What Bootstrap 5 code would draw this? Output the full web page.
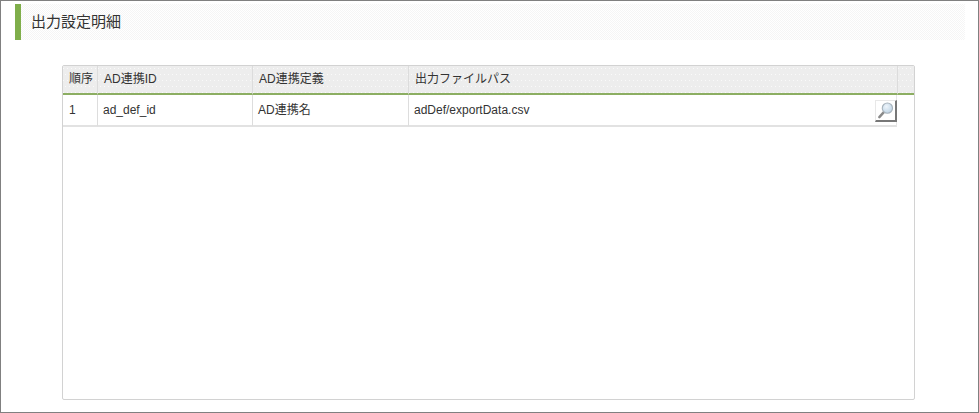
<!DOCTYPE html>
<html lang="ja">
<head>
<meta charset="utf-8">
<title>出力設定明細</title>
<link href="https://cdn.jsdelivr.net/npm/bootstrap@5.3.0/dist/css/bootstrap.min.css" rel="stylesheet">
<style>
html,body{height:100%;margin:0;background:#fff}
body{font-family:"Liberation Sans","Noto Sans CJK JP",sans-serif;font-size:12px;color:#333}
.frame{height:413px;border:1px solid #808080;padding:3px 0 0 14px;overflow:hidden}
.title-bar{height:36px;margin-right:13px;border-left:6px solid #7fae4a;padding-left:10px;font-size:15px;line-height:35px;color:#333;
 background:repeating-conic-gradient(#f5f5f5 0 25%,#fff 0 50%) 0 0/2px 2px}
.grid-wrap{margin:25px 63px 0 47px;height:335px;border:1px solid #d2d2d2;border-radius:2px}
.head-strip{display:flex}
.dotted-head{background-color:#ededed;
 background-image:conic-gradient(from 270deg at 1px 1px,#fafafa 25%,transparent 0),conic-gradient(from 270deg at 1px 1px,#fafafa 25%,transparent 0);
 background-size:4px 12px;background-position:0 2px,2px 8px}
.data-grid{table-layout:fixed;width:834px;border-collapse:separate;border-spacing:0;margin:0}
.data-grid th,.data-grid td{font-weight:400;font-size:12px;color:#333;vertical-align:middle;white-space:nowrap}
.data-grid th{height:29px;border-bottom:2px solid #8cae62;border-left:1px solid #dcdcdc;padding:0 0 1px 6px}
.data-grid th:first-child{border-left:0}
.data-grid td{height:32px;background:#fff;border-left:1px solid #ddd;border-bottom:2px solid #e2e2e2;padding:0 0 0 5px}
.data-grid td:first-child{border-left:0;padding-left:6px}
.data-grid td:last-child{border-right:1px solid #e6e6e6}
.head-end{flex:1;height:29px;border-bottom:2px solid #8cae62;border-left:1px solid #dcdcdc}
.cell-path{position:relative}
.zoom-btn{display:block;width:22px;height:22px;padding:0;background:#fff;border-style:solid;border-width:1px 2px 2px 1px;border-color:#e8e8e8 #777 #777 #e8e8e8;position:absolute;right:-1px;top:5px}
.zoom-btn svg{display:block;width:19px;height:19px}
</style>
</head>
<body>
<div class="frame">
  <div class="title-bar">出力設定明細</div>
  <div class="grid-wrap">
    <div class="head-strip">
      <table class="data-grid">
        <colgroup><col width="34"><col width="155"><col width="156"><col width="489"></colgroup>
        <thead>
          <tr><th class="dotted-head">順序</th><th class="dotted-head">AD連携ID</th><th class="dotted-head">AD連携定義</th><th class="dotted-head">出力ファイルパス</th></tr>
        </thead>
        <tbody>
          <tr>
            <td>1</td><td>ad_def_id</td><td>AD連携名</td>
            <td class="cell-path">adDef/exportData.csv
              <button type="button" class="zoom-btn" aria-label="検索">
                <svg viewBox="0 0 20 20"><defs><radialGradient id="g" cx=".4" cy=".35" r=".7"><stop offset="0" stop-color="#eef5fb"/><stop offset="1" stop-color="#bcd2e4"/></radialGradient></defs><line x1="3.5" y1="17" x2="8.5" y2="11.5" stroke="#8a8a8a" stroke-width="2.6" stroke-linecap="round"/><circle cx="12" cy="7.5" r="5.4" fill="url(#g)" stroke="#a9b4bd" stroke-width="1.2"/></svg>
              </button>
            </td>
          </tr>
        </tbody>
      </table>
      <div class="head-end dotted-head"></div>
    </div>
  </div>
</div>
</body>
</html>
